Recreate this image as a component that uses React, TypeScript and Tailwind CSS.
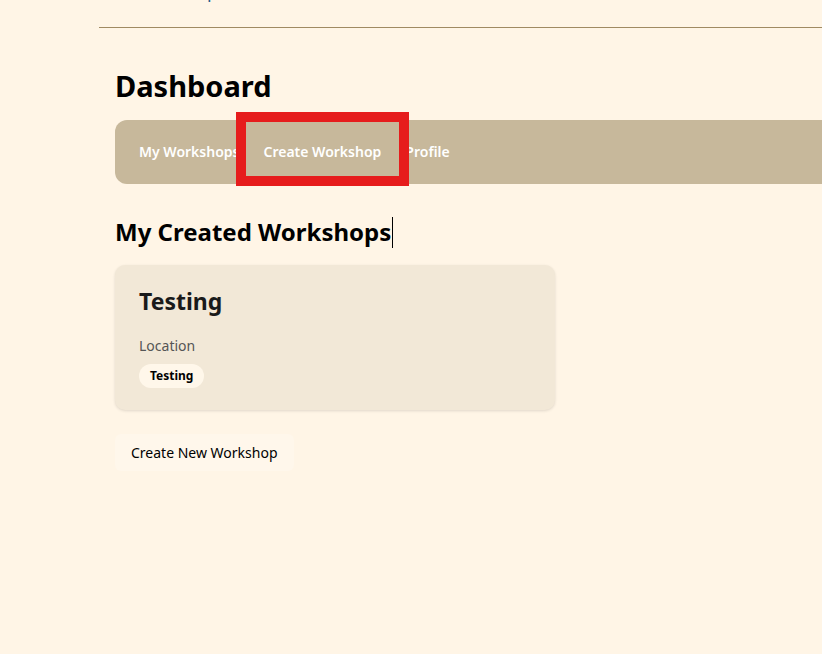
import React from 'react';

const navItems = ['My Workshops', 'Create Workshop', 'Profile'];

export default function App() {
  return (
    <div className="min-h-screen bg-[#fff5e6] font-['Noto_Sans',sans-serif] text-black overflow-hidden">
      <div className="ml-[99px]">
        {/* header, scrolled mostly out of view */}
        <header className="h-[28px] border-b border-[#a08a62] overflow-hidden relative">
          <span className="absolute left-[108px] -top-[21px] text-[18px] leading-6 text-[#1f5f8b]">p</span>
        </header>

        <main className="px-4 pt-[40px]">
          <h1 className="text-[29px] font-bold leading-[36px]">Dashboard</h1>

          <nav className="relative mt-[16px] h-[64px] -mr-4 flex items-center rounded-l-xl bg-[#c7b89b] pl-6 pb-px text-[14px] font-semibold text-white">
            {navItems.map((item) => (
              <button key={item} type="button" className="px-3 first:pl-0 h-full">
                {item}
              </button>
            ))}
            <div className="absolute left-[121px] top-[-8px] w-[173px] h-[74px] border-[10px] border-[#e61c1c]" />
          </nav>

          <h2 className="mt-[32px] text-[24px] font-bold leading-8 flex items-center">
            My Created Workshops
            <span className="inline-block w-px h-[31px] bg-black ml-px" />
          </h2>

          <div className="mt-[17px] w-[440px] rounded-[10px] bg-[#f2e8d7] px-6 pt-5 pb-[22px] shadow-[0_1px_3px_rgba(0,0,0,0.12)]">
            <h3 className="text-[23px] font-bold leading-8 text-[#1a1a1a]">Testing</h3>
            <p className="mt-[19px] text-[14px] leading-5 text-[#555]">Location</p>
            <div className="mt-[8px] flex">
              <span className="rounded-full bg-[#fff7ea] px-[11px] py-[3px] text-[12px] font-bold">Testing</span>
            </div>
          </div>

          <button type="button" className="mt-[24px] rounded-md bg-[#fff7eb] px-4 py-2 leading-[21px] text-[14px]">
            Create New Workshop
          </button>
        </main>
      </div>
    </div>
  );
}
